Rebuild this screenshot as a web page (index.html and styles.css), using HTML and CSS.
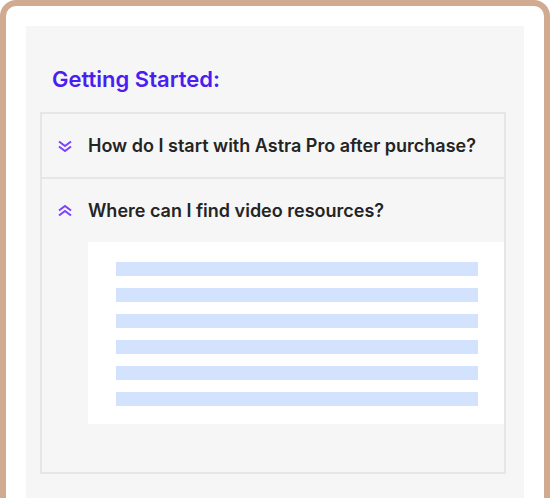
FILE: index.html
```html
<!DOCTYPE html>
<html lang="en">
<head>
    <meta charset="UTF-8">
    <meta name="viewport" content="width=device-width, initial-scale=1.0">
    <title>Getting Started FAQ</title>
    <link rel="stylesheet" href="styles.css">
</head>
<body>
    <div class="frame">
        <div class="panel">
            <h2 class="heading">Getting Started:</h2>

            <div class="faq">
                <div class="faq-item">
                    <div class="faq-question">
                        <svg class="chevron" width="16" height="12" viewBox="0 0 16 12">
                            <path d="M2 1.5 L8 6 L14 1.5 M2 6.5 L8 11 L14 6.5" fill="none" stroke="currentColor" stroke-width="2"/>
                        </svg>
                        <span>How do I start with Astra Pro after purchase?</span>
                    </div>
                </div>

                <div class="faq-item open">
                    <div class="faq-question">
                        <svg class="chevron" width="16" height="12" viewBox="0 0 16 12">
                            <path d="M2 5.5 L8 1 L14 5.5 M2 10.5 L8 6 L14 10.5" fill="none" stroke="currentColor" stroke-width="2"/>
                        </svg>
                        <span>Where can I find video resources?</span>
                    </div>
                    <div class="faq-answer">
                        <div class="line"></div>
                        <div class="line"></div>
                        <div class="line"></div>
                        <div class="line"></div>
                        <div class="line"></div>
                        <div class="line"></div>
                    </div>
                </div>
            </div>
        </div>
    </div>
</body>
</html>
```

FILE: styles.css
```css
body {
    margin: 0;
    padding: 0;
    background-color: #fff;
    font-family: 'Inter', 'Liberation Sans', sans-serif;
    width: 550px;
    height: 498px;
    overflow: hidden;
}

.frame {
    box-sizing: border-box;
    width: 550px;
    height: 520px;
    border: 6px solid #d0ab91;
    border-bottom: none;
    border-radius: 16px 16px 0 0;
    background-color: #fff;
    padding: 20px 20px 0 20px;
}

.panel {
    background-color: #f6f6f6;
    height: 100%;
    padding: 40px 18px 0 14px;
    box-sizing: border-box;
}

.heading {
    margin: 0 0 20px 12px;
    color: #4a1df0;
    font-size: 22px;
    font-weight: 600;
    line-height: 26px;
}

.faq {
    border: 2px solid #e6e6e6;
}

.faq-item + .faq-item {
    border-top: 2px solid #e6e6e6;
}

.faq-question {
    display: flex;
    align-items: center;
    height: 63px;
    padding-left: 15px;
    color: #242424;
    font-size: 18px;
    font-weight: 600;
}

.chevron {
    color: #7a42ff;
    margin-right: 15px;
    flex-shrink: 0;
}

.faq-answer {
    background-color: #fff;
    margin: 0 0 48px 46px;
    padding: 20px 26px 18px 28px;
}

.line {
    height: 14px;
    background-color: #d3e3fd;
}

.line + .line {
    margin-top: 12px;
}
```
